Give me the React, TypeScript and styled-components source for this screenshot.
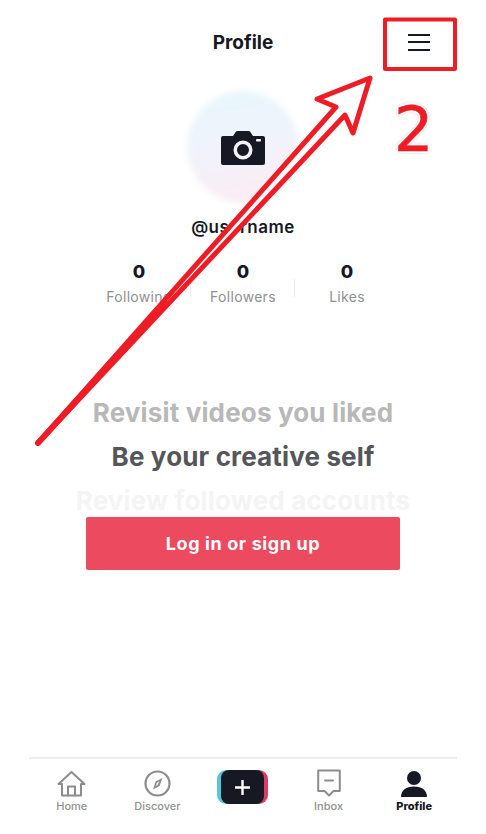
import React from "react"
import styled, { createGlobalStyle } from "styled-components"

const GlobalStyle = createGlobalStyle`
    html, body {
        margin: 0;
        padding: 0;
        background: #fff;
    }
    * {
        box-sizing: border-box;
    }
`;

const Page = styled.div`
    position: relative;
    width: 486px;
    height: 834px;
    overflow: hidden;
    display: flex;
    flex-direction: column;
    align-items: center;
    background: #fff;
    color: #161823;
    font-family: Inter, "Liberation Sans", sans-serif;
`;

const Header = styled.header`
    width: 100%;
    height: 84px;
    flex: none;
    display: grid;
    grid-template-columns: 1fr auto 1fr;
    align-items: center;
`;

const Title = styled.h1`
    grid-column: 2;
    margin: 0;
    font-size: 19px;
    font-weight: 700;
`;

const MenuButton = styled.div`
    justify-self: end;
    margin-right: 56px;
    width: 22px;
    height: 17px;
    display: flex;
    flex-direction: column;
    justify-content: space-between;
`;

const MenuLine = styled.span`
    display: block;
    height: 2px;
    background: #161823;
`;

const Avatar = styled.div`
    position: relative;
    flex: none;
    width: 114px;
    height: 114px;
    margin-top: 6px;
    display: flex;
    align-items: center;
    justify-content: center;

    &::before {
        content: "";
        position: absolute;
        inset: 1px;
        border-radius: 50%;
        background: linear-gradient(170deg, #e6f7fb 0%, #f1f3fb 50%, #fcebf0 100%);
        filter: blur(3px);
    }

    svg {
        position: relative;
    }
`;

const Username = styled.div`
    margin-top: 12px;
    font-size: 17px;
    line-height: 22px;
    font-weight: 600;
    letter-spacing: 0.5px;
`;

const Stats = styled.div`
    margin-top: 24px;
    display: grid;
    grid-template-columns: repeat(3, 104px);
`;

const Stat = styled.div<{ $divider?: boolean }>`
    position: relative;
    display: flex;
    flex-direction: column;
    align-items: center;

    &::after {
        content: "";
        display: ${(p) => (p.$divider ? "block" : "none")};
        position: absolute;
        right: 0;
        top: 17px;
        width: 1px;
        height: 18px;
        background: #ececec;
    }
`;

const StatNumber = styled.div`
    font-size: 18px;
    line-height: 20px;
    font-weight: 800;
`;

const StatLabel = styled.div`
    margin-top: 6px;
    font-size: 14px;
    line-height: 18px;
    letter-spacing: 0.3px;
    color: #8f9094;
`;

const Carousel = styled.div`
    margin-top: 85px;
    width: 100%;
    height: 126px;
    flex: none;
    overflow: hidden;
    display: flex;
    flex-direction: column;
    align-items: center;
`;

const Slide = styled.div<{ $tone: string }>`
    flex: none;
    height: 44px;
    line-height: 44px;
    font-size: 26px;
    font-weight: 700;
    letter-spacing: 0.15px;
    white-space: nowrap;
    color: ${(p) => p.$tone};
`;

const LoginButton = styled.button`
    flex: none;
    width: 314px;
    height: 53px;
    border: 0;
    border-radius: 2px;
    background: #ec4a5e;
    color: #fff;
    font-family: inherit;
    font-size: 18px;
    font-weight: 700;
    letter-spacing: 0.6px;
`;

const TabBar = styled.nav`
    margin-top: auto;
    width: 428px;
    height: 77px;
    flex: none;
    border-top: 2px solid #ececec;
    display: grid;
    grid-template-columns: repeat(5, 1fr);
`;

const Tab = styled.div`
    padding-top: 11px;
    display: flex;
    flex-direction: column;
    align-items: center;
`;

const TabIcon = styled.div`
    height: 27px;
    display: flex;
    align-items: center;
    justify-content: center;
`;

const TabLabel = styled.span<{ $active?: boolean }>`
    margin-top: 1px;
    font-size: 11px;
    line-height: 16px;
    font-weight: ${(p) => (p.$active ? 800 : 500)};
    color: ${(p) => (p.$active ? "#161823" : "#919191")};
`;

const CreateButton = styled.div`
    position: relative;
    width: 51px;
    height: 34px;
    border-radius: 9px;
    background: linear-gradient(90deg, #55c6dc 0 50%, #dd3a68 50% 100%);
    display: flex;
    align-items: center;
    justify-content: center;
`;

const CreateInner = styled.div`
    width: 43px;
    height: 34px;
    border-radius: 8px;
    background: #161823;
    display: flex;
    align-items: center;
    justify-content: center;
`;

const Annotation = styled.svg`
    position: absolute;
    left: 0;
    top: 0;
    pointer-events: none;
`;

const StepNumber = styled.div`
    position: absolute;
    left: 394px;
    top: 92px;
    font-family: "DejaVu Sans", sans-serif;
    font-size: 62px;
    line-height: 76px;
    color: #ee1c25;
    -webkit-text-stroke: 0.6px #ee1c25;
    text-shadow: 2px 0 0 #fff, -2px 0 0 #fff, 0 2px 0 #fff, 0 -2px 0 #fff, 0 0 4px #999;
`;

const HomeIcon = () => (
    <svg width="29" height="27" viewBox="0 0 29 27" fill="none" stroke="#8c8c8c" strokeWidth="2" strokeLinejoin="round" strokeLinecap="round">
        <path d="M1.5 14 14.5 2 27.5 14H24V25.5H5V14Z" />
        <path d="M11 25.5V16.5H18V25.5" />
    </svg>
)

const CompassIcon = () => (
    <svg width="27" height="27" viewBox="0 0 27 27" fill="none">
        <circle cx="13.5" cy="13.5" r="12" stroke="#8c8c8c" strokeWidth="2.2" />
        <path d="M18.5 8 15.5 16 9 19.5 11.5 11.5Z" fill="#8c8c8c" />
        <path d="M15.5 11 13.5 15 12 16 12.8 13Z" fill="#fff" />
    </svg>
)

const PlusIcon = () => (
    <svg width="17" height="17" viewBox="0 0 17 17" stroke="#fff" strokeWidth="2.4">
        <path d="M8.5 1V16M1 8.5H16" />
    </svg>
)

const InboxIcon = () => (
    <svg width="24" height="29" viewBox="0 0 24 29" fill="none" stroke="#8c8c8c" strokeWidth="2" strokeLinejoin="round">
        <path d="M1.2 1.5H22.8V22H16.5L12 26.5 7.5 22H1.2Z" />
        <path d="M8 11.5H16" strokeLinecap="round" />
    </svg>
)

const PersonIcon = () => (
    <svg width="28" height="26" viewBox="0 0 28 26" fill="#161823">
        <circle cx="14" cy="7" r="7" />
        <path d="M1 26C1 19.5 6 15.5 14 15.5S27 19.5 27 26Z" />
    </svg>
)

const CameraIcon = () => (
    <svg width="44" height="35" viewBox="0 0 44 35">
        <path fillRule="evenodd" fill="#161823" d="M2 6H12L15 1.5Q15.5 1 16.5 1H27.5Q28.5 1 29 1.5L32 6H42Q44 6 44 8V33Q44 35 42 35H2Q0 35 0 33V8Q0 6 2 6ZM22 10.5A9.5 9.5 0 1 0 22 29.5 9.5 9.5 0 1 0 22 10.5ZM22 14A6 6 0 1 1 22 26 6 6 0 1 1 22 14Z" />
        <rect x="35" y="9" width="5" height="2.6" rx="1" fill="#fff" />
    </svg>
)

const App: React.FC = () => {

    return(
        <Page>
            <GlobalStyle />
            <Header>
                <Title>Profile</Title>
                <MenuButton>
                    <MenuLine />
                    <MenuLine />
                    <MenuLine />
                </MenuButton>
            </Header>
            <Avatar>
                <CameraIcon />
            </Avatar>
            <Username>@username</Username>
            <Stats>
                <Stat $divider>
                    <StatNumber>0</StatNumber>
                    <StatLabel>Following</StatLabel>
                </Stat>
                <Stat $divider>
                    <StatNumber>0</StatNumber>
                    <StatLabel>Followers</StatLabel>
                </Stat>
                <Stat>
                    <StatNumber>0</StatNumber>
                    <StatLabel>Likes</StatLabel>
                </Stat>
            </Stats>
            <Carousel>
                <Slide $tone="#b8b8b8">Revisit videos you liked</Slide>
                <Slide $tone="#55565a">Be your creative self</Slide>
                <Slide $tone="#f4f4f4">Review followed accounts</Slide>
            </Carousel>
            <LoginButton>Log in or sign up</LoginButton>
            <TabBar>
                <Tab>
                    <TabIcon><HomeIcon /></TabIcon>
                    <TabLabel>Home</TabLabel>
                </Tab>
                <Tab>
                    <TabIcon><CompassIcon /></TabIcon>
                    <TabLabel>Discover</TabLabel>
                </Tab>
                <Tab>
                    <CreateButton>
                        <CreateInner><PlusIcon /></CreateInner>
                    </CreateButton>
                </Tab>
                <Tab>
                    <TabIcon><InboxIcon /></TabIcon>
                    <TabLabel>Inbox</TabLabel>
                </Tab>
                <Tab>
                    <TabIcon><PersonIcon /></TabIcon>
                    <TabLabel $active>Profile</TabLabel>
                </Tab>
            </TabBar>
            <Annotation width="486" height="834" viewBox="0 0 486 834" fill="none" stroke="#ee1c25" strokeLinejoin="round" strokeLinecap="round">
                <rect x="385" y="19.5" width="70" height="49.5" strokeWidth="4" />
                <path d="M38 443 336 107 317 99 370 78 353 133 345 115Z" strokeWidth="5" fill="#fff" />
                <path d="M38 443 165 303" strokeWidth="6" />
            </Annotation>
            <StepNumber>2</StepNumber>
        </Page>
    )

}

export default App;
